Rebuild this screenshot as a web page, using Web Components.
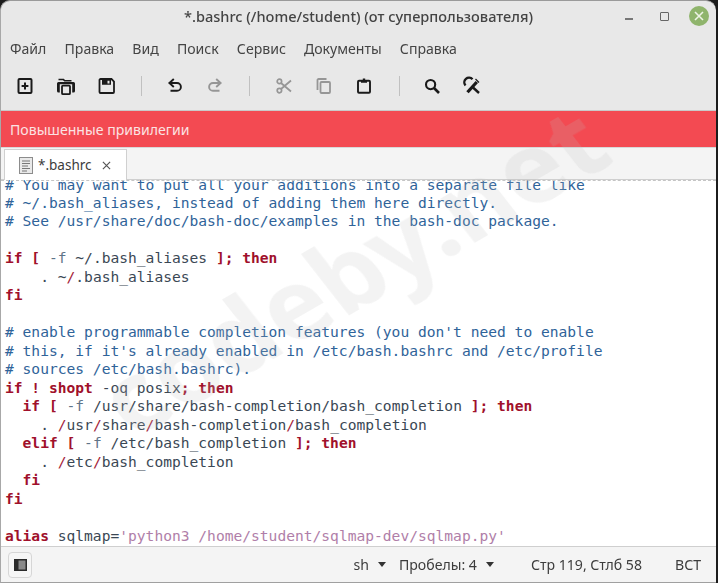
<!DOCTYPE html>
<html lang="ru">
<head>
<meta charset="utf-8">
<title>*.bashrc</title>
<style>
  html, body { margin: 0; padding: 0; background: #1c1c1c; }
  body { width: 718px; height: 583px; overflow: hidden; font-family: "Noto Sans", sans-serif; }
</style>
</head>
<body>
<app-window>
  <title-bar>*.bashrc (/home/student) (от суперпользователя)</title-bar>
  <menu-bar>
    <span>Файл</span><span>Правка</span><span>Вид</span><span>Поиск</span><span>Сервис</span><span>Документы</span><span>Справка</span>
  </menu-bar>
  <tool-bar></tool-bar>
  <info-bar>Повышенные привилегии</info-bar>
  <tab-bar>*.bashrc</tab-bar>
  <code-view></code-view>
  <status-bar></status-bar>
  <water-mark>codeby.net</water-mark>
</app-window>

<script>
/** Window shell: stacks the bars and clips the rounded top corners. */
class AppWindow extends HTMLElement {
  constructor() {
    super();
    this.attachShadow({ mode: "open" });
    this.shadowRoot.innerHTML = `
      <style>
        :host {
          display: flex;
          flex-direction: column;
          position: relative;
          box-sizing: border-box;
          width: 716px;
          height: 583px;
          overflow: hidden;
          background: #e8e8e8;
          border-radius: 10px 10px 0 0;
          border-left: 1px solid #a8a8a8;
          border-top: 1px solid #9a9a9a;
          border-bottom: 1px solid #a0a0a0;
          color: #3c3c3c;
          filter: blur(0.35px);
        }
      </style>
      <slot></slot>
    `;
  }
}

/** Title row with the window controls on the right. */
class TitleBar extends HTMLElement {
  constructor() {
    super();
    this.attachShadow({ mode: "open" });
    this.shadowRoot.innerHTML = `
      <style>
        :host {
          display: flex;
          align-items: center;
          justify-content: center;
          position: relative;
          box-sizing: border-box;
          height: 32px;
          padding-bottom: 2px;
          flex: none;
          font: 500 14.55px "Noto Sans", sans-serif;
          color: #444;
        }
        .controls {
          position: absolute;
          right: 7px;
          top: 5px;
          display: flex;
          align-items: center;
        }
        .min { width: 8px; height: 2px; background: #777; margin-top: 5px; }
        .max { box-sizing: border-box; width: 9px; height: 9px; border: 1.5px solid #666; border-radius: 1px; margin-left: 27px; }
        .close {
          width: 20px; height: 20px; border-radius: 50%; background: #8fb46c;
          margin-left: 20px; display: flex; align-items: center; justify-content: center;
        }
      </style>
      <slot></slot>
      <div class="controls">
        <div class="min"></div>
        <div class="max"></div>
        <div class="close">
          <svg width="12" height="12" viewBox="0 0 12 12"><path d="M2 2l8 8M10 2l-8 8" stroke="#eef3e6" stroke-width="1.6" fill="none"/></svg>
        </div>
      </div>
    `;
  }
}

class MenuBar extends HTMLElement {
  constructor() {
    super();
    this.attachShadow({ mode: "open" });
    this.shadowRoot.innerHTML = `
      <style>
        :host {
          display: flex;
          align-items: center;
          gap: 18.1px;
          box-sizing: border-box;
          height: 32px;
          padding: 0 0 1px 9px;
          flex: none;
          font: 14.1px "Noto Sans", sans-serif;
          color: #444;
        }
      </style>
      <slot></slot>
    `;
  }
}

// Toolbar icons on a 16x16 grid; a few run past it, the svg does not clip
const ICONS = {
  new: `<rect x="1.5" y="1" width="13" height="14" rx="1" fill="none" stroke="currentColor" stroke-width="2"/><path d="M8 4.6v6.8M4.6 8h6.8" stroke="currentColor" stroke-width="2"/>`,
  open: `<path d="M0.5 1.6h5l1.2 1.2h6.8" stroke="currentColor" stroke-width="1.5" fill="none"/><path d="M-1 5.5A1.5 1.5 0 0 1 .5 4h15A1.5 1.5 0 0 1 17 5.5V13a1.5 1.5 0 0 1-1.5 1.5h-1.3V6.2H1.8v8.3H.5A1.5 1.5 0 0 1-1 13z" fill="currentColor"/><rect x="4" y="7.6" width="8" height="8.6" rx="1" fill="none" stroke="currentColor" stroke-width="1.8"/>`,
  save: `<path d="M1.5 1h11l2.5 2.5V14a1 1 0 0 1-1 1H1.5a1 1 0 0 1-1-1V2a1 1 0 0 1 1-1z" fill="none" stroke="currentColor" stroke-width="1.8"/><path fill-rule="evenodd" d="M3 1.5h9v5.3H3zM8.5 2.8v2.6h2V2.8z" fill="currentColor"/>`,
  undo: `<path d="M3 5h7a3.9 3.9 0 0 1 0 7.8H3.5" fill="none" stroke="currentColor" stroke-width="1.9"/><path d="M6.8 1L2.4 5l4.4 4" fill="none" stroke="currentColor" stroke-width="1.9"/>`,
  redo: `<path d="M13 5H6a3.9 3.9 0 0 0 0 7.8h6.5" fill="none" stroke="currentColor" stroke-width="1.9"/><path d="M9.2 1l4.4 4-4.4 4" fill="none" stroke="currentColor" stroke-width="1.9"/>`,
  cut: `<circle cx="3.4" cy="3.4" r="2.2" fill="none" stroke="currentColor" stroke-width="1.7"/><circle cx="3.4" cy="12.6" r="2.2" fill="none" stroke="currentColor" stroke-width="1.7"/><path d="M5 5l10 8.5M5 11L15 2.5" stroke="currentColor" stroke-width="1.8"/>`,
  copy: `<path d="M10.5 1H2.5a1 1 0 0 0-1 1v10" fill="none" stroke="currentColor" stroke-width="1.8"/><rect x="4.5" y="4" width="9.5" height="11" rx="1" fill="none" stroke="currentColor" stroke-width="1.8"/>`,
  paste: `<rect x="2" y="2.8" width="12" height="12" rx="1" fill="none" stroke="currentColor" stroke-width="1.9"/><path d="M5 4.8V2.3h1.8V.6h2.4v1.7H11v2.500z" fill="currentColor"/>`,
  find: `<circle cx="6.6" cy="6.6" r="4.6" fill="none" stroke="currentColor" stroke-width="2.1"/><path d="M10 10l5 5" stroke="currentColor" stroke-width="2.6"/>`,
  tools: `<path d="M8.5 1.3A4.6 4.6 0 0 0 1.5 7.5" fill="none" stroke="currentColor" stroke-width="2.4"/><path d="M3.5 14.3L12.8 4" stroke="currentColor" stroke-width="3.2"/><path d="M9 9.5l6 5.5" stroke="currentColor" stroke-width="2.4"/><path d="M11.5 1L15 4.5" stroke="currentColor" stroke-width="1.3"/>`,
};

class ToolButton extends HTMLElement {
  constructor() {
    super();
    this.attachShadow({ mode: "open" });
  }

  connectedCallback() {
    const icon = ICONS[this.getAttribute("icon")] || "";
    const disabled = this.hasAttribute("disabled");
    this.shadowRoot.innerHTML = `
      <style>
        :host {
          display: flex;
          align-items: center;
          justify-content: center;
          width: 16px;
          height: 16px;
          color: ${disabled ? "#969696" : "#1a1a1a"};
        }
        svg { display: block; overflow: visible; }
      </style>
      <svg width="16" height="16" viewBox="0 0 16 16">${icon}</svg>
    `;
  }
}

class ToolBar extends HTMLElement {
  constructor() {
    super();
    this.attachShadow({ mode: "open" });
    this.shadowRoot.innerHTML = `
      <style>
        :host {
          display: flex;
          align-items: center;
          height: 46px;
          flex: none;
          padding-left: 16px;
          box-sizing: border-box;
          padding-bottom: 3px;
          border-bottom: 1px solid #c9c9c9;
        }
        .group { display: flex; gap: 24px; }
        .first { gap: 25px; }
        .sep { width: 1px; height: 20px; background: #c0c0c0; margin: 0 25px 0 26px; }
        .wide { margin: 0 26px 0 26px; }
        .tight { margin: 0 24px 0 27px; }
      </style>
      <div class="group first">
        <tool-button icon="new"></tool-button>
        <tool-button icon="open"></tool-button>
        <tool-button icon="save"></tool-button>
      </div>
      <div class="sep"></div>
      <div class="group">
        <tool-button icon="undo"></tool-button>
        <tool-button icon="redo" disabled></tool-button>
      </div>
      <div class="sep wide"></div>
      <div class="group">
        <tool-button icon="cut" disabled></tool-button>
        <tool-button icon="copy" disabled></tool-button>
        <tool-button icon="paste"></tool-button>
      </div>
      <div class="sep tight"></div>
      <div class="group">
        <tool-button icon="find"></tool-button>
        <tool-button icon="tools"></tool-button>
      </div>
    `;
  }
}

class InfoBar extends HTMLElement {
  constructor() {
    super();
    this.attachShadow({ mode: "open" });
    this.shadowRoot.innerHTML = `
      <style>
        :host {
          display: flex;
          align-items: center;
          height: 36px;
          flex: none;
          padding-left: 9px;
          background: #f34a52;
          color: #fbe3e3;
          font: 14.1px "Noto Sans", sans-serif;
        }
      </style>
      <slot></slot>
    `;
  }
}

/** Tab strip with a single open document. */
class TabBar extends HTMLElement {
  constructor() {
    super();
    this.attachShadow({ mode: "open" });
    this.shadowRoot.innerHTML = `
      <style>
        :host {
          display: flex;
          align-items: flex-end;
          height: 33px;
          flex: none;
          box-sizing: border-box;
          padding-left: 3px;
          background: #f4f4f4;
          border-top: 1px solid #d8d8d8;
          border-bottom: 1px solid #cfcfcf;
          font: 13.5px "Noto Sans", sans-serif;
          color: #3c3c3c;
        }
        .tab {
          display: flex;
          align-items: center;
          box-sizing: border-box;
          width: 123px;
          height: 31px;
          margin-bottom: -1px;
          padding-left: 14px;
          gap: 5px;
          background: #fff;
          border: 1px solid #d0d0d0;
          border-bottom: none;
        }
        svg { display: block; flex: none; }
        .x { margin-left: 5px; }
      </style>
      <div class="tab">
        <svg width="14" height="17" viewBox="0 0 14 17">
          <rect x=".5" y=".5" width="13" height="16" fill="#e9e9e9" stroke="#8c8c8c"/>
          <path d="M3 4h8M3 6.5h8M3 9h6M3 11.5h8M3 14h5" stroke="#777" stroke-width="1.2"/>
        </svg>
        <span><slot></slot></span>
        <svg class="x" width="9" height="9" viewBox="0 0 10 10"><path d="M1 1l8 8M9 1l-8 8" stroke="#555" stroke-width="1.3"/></svg>
      </div>
    `;
  }
}

// Source text of the editor; c = comment, s = string, r = operator slash
const CODE = [
  `<i class="c"># You may want to put all your additions into a separate file like</i>`,
  `<i class="c"># ~/.bash_aliases, instead of adding them here directly.</i>`,
  `<i class="c"># See /usr/share/doc/bash-doc/examples in the bash-doc package.</i>`,
  ``,
  `<b>if [</b> <u>-f</u> ~/.bash_aliases <b>]; then</b>`,
  `    . ~<i class="r">/</i>.bash_aliases`,
  `<b>fi</b>`,
  ``,
  `<i class="c"># enable programmable completion features (you don't need to enable</i>`,
  `<i class="c"># this, if it's already enabled in /etc/bash.bashrc and /etc/profile</i>`,
  `<i class="c"># sources /etc/bash.bashrc).</i>`,
  `<b>if ! shopt</b> -oq posix<b>; then</b>`,
  `  <b>if [</b> <u>-f</u> /usr/share/bash-completion/bash_completion <b>]; then</b>`,
  `    . <i class="r">/</i>usr<i class="r">/</i>share<i class="r">/</i>bash-completion<i class="r">/</i>bash_completion`,
  `  <b>elif [</b> <u>-f</u> /etc/bash_completion <b>]; then</b>`,
  `    . <i class="r">/</i>etc<i class="r">/</i>bash_completion`,
  `  <b>fi</b>`,
  `<b>fi</b>`,
  ``,
  `<b>alias</b> sqlmap=<i class="s">'python3 /home/student/sqlmap-dev/sqlmap.py'</i>`,
];

class CodeView extends HTMLElement {
  constructor() {
    super();
    this.attachShadow({ mode: "open" });
    this.shadowRoot.innerHTML = `
      <style>
        :host {
          display: block;
          flex: 1;
          min-height: 0;
          position: relative;
          overflow: hidden;
          background: #fff;
        }
        .guide {
          position: absolute;
          top: 0; left: 0; right: 0;
          border-top: 1px dashed #c4c4c4;
        }
        pre {
          margin: -4.5px 0 0 0;
          padding-left: 4px;
          font: 14.6px/18.48px "DejaVu Sans Mono", monospace;
          color: #3a4754;
        }
        i { font-style: normal; }
        .c { color: #2f6399; }
        .s { color: #b07ea8; }
        .r { color: #a51d3a; }
        u { text-decoration: none; color: #5f7488; }
        b { color: #a0102b; font-weight: bold; }
      </style>
      <pre>${CODE.join("\n")}</pre>
      <div class="guide"></div>
    `;
  }
}

class StatusBar extends HTMLElement {
  constructor() {
    super();
    this.attachShadow({ mode: "open" });
    this.shadowRoot.innerHTML = `
      <style>
        :host {
          display: flex;
          align-items: center;
          height: 36px;
          flex: none;
          box-sizing: border-box;
          padding-left: 7px;
          background: #f4f4f4;
          border-top: 1px solid #cfcfcf;
          font: 14.1px "Noto Sans", sans-serif;
          color: #3c3c3c;
        }
        .panel {
          box-sizing: border-box;
          width: 24px; height: 26px;
          display: flex; align-items: center; justify-content: center;
          border: 1px solid #d6d6d6;
          border-radius: 4px;
          background: #f6f6f6;
          margin-right: auto;
        }
        .combo { display: flex; align-items: center; gap: 9px; }
        .arrow { width: 0; height: 0; border: 4px solid transparent; border-top: 5px solid #333; border-bottom: none; }
        .lang { margin-right: 13px; }
        .pos { margin-left: 37px; }
        .ins { margin-left: 33px; margin-right: 15px; }
      </style>
      <div class="panel">
        <svg width="13" height="12" viewBox="0 0 13 12"><rect x=".75" y=".75" width="11.5" height="10.5" fill="#8a8a8a" stroke="#2b2b2b" stroke-width="1.5"/><path d="M1 1h3.5v10H1z" fill="#2b2b2b"/></svg>
      </div>
      <span class="combo lang">sh <span class="arrow"></span></span>
      <span class="combo">Пробелы: 4 <span class="arrow"></span></span>
      <span class="pos">Стр 119, Стлб 58</span>
      <span class="ins">ВСТ</span>
    `;
  }
}

/** Diagonal site watermark laid over the whole window. */
class WaterMark extends HTMLElement {
  constructor() {
    super();
    this.attachShadow({ mode: "open" });
    this.shadowRoot.innerHTML = `
      <style>
        :host {
          position: absolute;
          left: 108px;
          top: 357px;
          transform: rotate(-30deg) skewX(8deg);
          transform-origin: 0 50%;
          font: bold 102px "Noto Sans", sans-serif;
          line-height: 1;
          white-space: nowrap;
          color: rgba(190, 190, 190, 0.18);
          pointer-events: none;
        }
      </style>
      <slot></slot>
    `;
  }
}

customElements.define("app-window", AppWindow);
customElements.define("title-bar", TitleBar);
customElements.define("menu-bar", MenuBar);
customElements.define("tool-button", ToolButton);
customElements.define("tool-bar", ToolBar);
customElements.define("info-bar", InfoBar);
customElements.define("tab-bar", TabBar);
customElements.define("code-view", CodeView);
customElements.define("status-bar", StatusBar);
customElements.define("water-mark", WaterMark);
</script>
</body>
</html>
